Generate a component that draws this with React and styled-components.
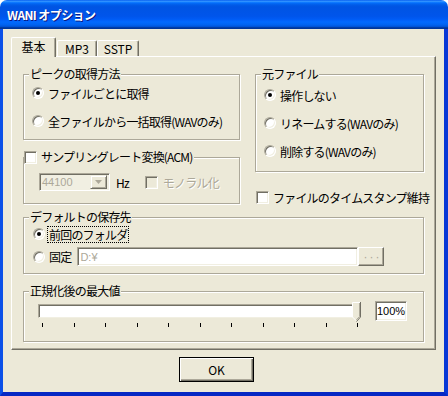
import React from "react"
import styled, { createGlobalStyle } from "styled-components"

// colours
const face = "#ECE9D8"
const shadow = "#ACA899"
const darkShadow = "#716F64"
const light = "#F1EFE2"
const disabledText = "#ACA899"

const GlobalStyle = createGlobalStyle`
  html, body {
    margin: 0;
    padding: 0;
    background: #fff;
  }
  body {
    font-family: "Noto Sans CJK JP", "Noto Sans", sans-serif;
    font-size: 12px;
    line-height: 14px;
    color: #000;
    letter-spacing: -0.8px;
  }
`

// window frame
const Window = styled.div`
  width: 448px;
  height: 396px;
  display: flex;
  flex-direction: column;
  border-radius: 7px 7px 0 0;
  overflow: hidden;
`
const TitleBar = styled.div`
  height: 29px;
  flex: none;
  display: flex;
  align-items: center;
  padding-left: 7px;
  background: linear-gradient(
    to bottom,
    #0058ee 0%,
    #3593ff 4%,
    #288eff 6%,
    #127dff 8%,
    #036ffc 10%,
    #0262ee 14%,
    #0057e5 20%,
    #0054e3 24%,
    #0055eb 56%,
    #005bf5 66%,
    #026afe 76%,
    #0062ef 86%,
    #0052d6 92%,
    #0040ab 94%,
    #003092 100%
  );
  color: #fff;
  font-weight: bold;
  font-size: 12px;
  letter-spacing: -0.6px;
  text-shadow: 1px 1px 0 #0a1883;
`
const Client = styled.div`
  flex: 1;
  display: flex;
  flex-direction: column;
  background: ${face};
  border-left: 3px solid #0b50e8;
  border-right: 4px solid #0737d6;
  border-bottom: 4px solid #0628c4;
  padding: 8px 8px 0;
`

// tabs
const TabRow = styled.div`
  display: flex;
  align-items: flex-end;
  height: 19px;
  position: relative;
  z-index: 1;
`
const Tab = styled.div`
  box-sizing: border-box;
  width: ${p => p.$w}px;
  height: ${p => (p.$active ? 20 : 16)}px;
  margin-bottom: ${p => (p.$active ? -1 : 0)}px;
  margin-left: ${p => p.$ml || 0}px;
  background: ${face};
  border-left: 1px solid #fff;
  border-top: 1px solid #fff;
  border-right: 1px solid ${darkShadow};
  border-radius: 2px 2px 0 0;
  box-shadow: inset -1px 0 0 ${shadow};
  display: flex;
  align-items: center;
  justify-content: center;
  padding-bottom: ${p => (p.$active ? 2 : 0)}px;
  letter-spacing: 0;
`
const Panel = styled.div`
  box-sizing: border-box;
  width: 425px;
  height: 294px;
  border-left: 1px solid #fff;
  border-top: 1px solid #fff;
  border-right: 1px solid ${darkShadow};
  border-bottom: 1px solid ${darkShadow};
  box-shadow: inset -1px -1px 0 ${shadow};
  padding: 17px 11px 0;
  display: flex;
  flex-direction: column;
`
const Columns = styled.div`
  display: grid;
  grid-template-columns: 217px 169px;
  column-gap: 15px;
  align-items: start;
`
const Column = styled.div`
  display: flex;
  flex-direction: column;
`

// group boxes
const Group = styled.div`
  box-sizing: border-box;
  height: ${p => p.$h}px;
  margin-top: ${p => p.$mt || 0}px;
  border: 1px solid ${shadow};
  box-shadow: inset 1px 1px 0 #fff, 1px 1px 0 #fff;
  display: flex;
  flex-direction: column;
`
const Legend = styled.div`
  align-self: flex-start;
  height: 14px;
  margin: -8px 0 0 ${p => (p.$ml === undefined ? 5 : p.$ml)}px;
  padding: 0 1px 0 ${p => (p.$pl === undefined ? 1 : p.$pl)}px;
  background: ${face};
  display: flex;
  align-items: center;
  gap: 4px;
  white-space: nowrap;
`
const Row = styled.div`
  display: flex;
  align-items: center;
  gap: ${p => (p.$gap === undefined ? 4 : p.$gap)}px;
  height: ${p => p.$h || 16}px;
  margin-top: ${p => p.$mt || 0}px;
  padding-left: ${p => p.$pl || 0}px;
  white-space: nowrap;
`
const Label = styled.span`
  color: ${p => (p.$disabled ? disabledText : "#000")};
  text-shadow: ${p => (p.$disabled ? "1px 1px 0 #fff" : "none")};
  outline: ${p => (p.$focus ? "1px dotted #000" : "none")};
  padding: ${p => (p.$focus ? "0 1px" : "0")};
  margin-left: ${p => (p.$focus ? -1 : 0)}px;
  line-height: 15px;
`

// controls
const Radio = styled.span`
  box-sizing: border-box;
  width: 12px;
  height: 12px;
  flex: none;
  border-radius: 50%;
  background: #fff;
  border: 1px solid;
  border-color: ${shadow} #fff #fff ${shadow};
  box-shadow: inset 1px 1px 0 ${darkShadow}, inset -1px -1px 0 ${light};
  display: flex;
  align-items: center;
  justify-content: center;
  &::after {
    content: "";
    display: ${p => (p.$checked ? "block" : "none")};
    width: 4px;
    height: 4px;
    border-radius: 50%;
    background: #000;
  }
`
const Check = styled.span`
  box-sizing: border-box;
  width: 13px;
  height: 13px;
  flex: none;
  margin-left: ${p => p.$ml || 0}px;
  background: ${p => (p.$disabled ? face : "#fff")};
  border: 1px solid;
  border-color: ${shadow} #fff #fff ${shadow};
  box-shadow: inset 1px 1px 0 ${darkShadow}, inset -1px -1px 0 ${light};
`
const Sunken = styled.div`
  box-sizing: border-box;
  height: ${p => p.$h}px;
  width: ${p => p.$w}px;
  flex: none;
  background: ${p => p.$bg || "#fff"};
  border: 1px solid;
  border-color: ${shadow} #fff #fff ${shadow};
  box-shadow: inset 1px 1px 0 ${darkShadow}, inset -1px -1px 0 ${light};
  display: flex;
  align-items: center;
  padding-left: 2px;
  color: ${p => p.$color || "#000"};
  font-family: "Liberation Sans", "Noto Sans CJK JP", sans-serif;
  font-size: 11px;
  letter-spacing: 0;
`
const Combo = styled(Sunken)`
  justify-content: space-between;
  padding-right: 2px;
`
const DropButton = styled.span`
  box-sizing: border-box;
  width: 17px;
  height: 14px;
  background: ${face};
  border: 1px solid;
  border-color: ${light} ${darkShadow} ${darkShadow} ${light};
  box-shadow: inset 1px 1px 0 #fff, inset -1px -1px 0 ${shadow};
  display: flex;
  align-items: center;
  justify-content: center;
`
const Raised = styled.div`
  box-sizing: border-box;
  width: ${p => p.$w}px;
  height: ${p => p.$h}px;
  flex: none;
  background: ${face};
  border: 1px solid;
  border-color: #fff ${darkShadow} ${darkShadow} #fff;
  box-shadow: inset -1px -1px 0 ${shadow};
  display: flex;
  align-items: center;
  justify-content: center;
  color: ${disabledText};
  font-family: "Liberation Sans", sans-serif;
  letter-spacing: 2px;
  padding-left: 2px;
`

// trackbar
const SliderBox = styled.div`
  width: 324px;
  margin-left: 14px;
  padding-top: 3px;
  flex: none;
`
const Track = styled.div`
  box-sizing: border-box;
  position: relative;
  width: 323px;
  height: 14px;
  background: #fff;
  border: 1px solid;
  border-color: ${shadow} ${light} ${light} ${shadow};
  box-shadow: inset 1px 1px 0 ${darkShadow};
`
const Thumb = styled.svg`
  position: absolute;
  right: -1px;
  top: -3px;
`
const Ticks = styled.div`
  display: flex;
  justify-content: space-between;
  width: 316px;
  margin: 5px 0 0 4px;
`
const Tick = styled.span`
  width: 1px;
  height: 4px;
  background: #000;
`
const ValueBox = styled(Sunken)`
  margin-left: 13px;
  font-size: 11px;
  padding-left: 1px;
`

// footer
const Footer = styled.div`
  display: flex;
  margin-top: 7px;
  padding-left: 168px;
`
const OkButton = styled.div`
  box-sizing: border-box;
  width: 75px;
  height: 25px;
  border: 1px solid #000;
  background: ${face};
  box-shadow: inset 1px 1px 0 #fff, inset -1px -1px 0 ${darkShadow},
    inset -2px -2px 0 ${shadow};
  display: flex;
  align-items: center;
  justify-content: center;
  font-size: 12px;
  letter-spacing: 0;
`

const ticks = Array.from({ length: 11 })

export default function App() {
  return (
    <>
      <GlobalStyle />
      <Window>
        <TitleBar>WANI オプション</TitleBar>
        <Client>
          <TabRow>
            <Tab $w={45} $active>
              基本
            </Tab>
            <Tab $w={40} $ml={1}>
              MP3
            </Tab>
            <Tab $w={42}>SSTP</Tab>
          </TabRow>
          <Panel>
            <Columns>
              <Column>
                <Group $h={66}>
                  <Legend>ピークの取得方法</Legend>
                  <Row $mt={4} $pl={8}>
                    <Radio $checked />
                    <Label>ファイルごとに取得</Label>
                  </Row>
                  <Row $mt={12} $pl={8}>
                    <Radio />
                    <Label>全ファイルから一括取得(WAVのみ)</Label>
                  </Row>
                </Group>
                <Group $h={47} $mt={17}>
                  <Legend $ml={0} $pl={0}>
                    <Check />
                    サンプリングレート変換(ACM)
                  </Legend>
                  <Row $h={18} $mt={9} $pl={15} $gap={0}>
                    <Combo $w={71} $h={18} $bg={light} $color={disabledText}>
                      44100
                      <DropButton>
                        <svg width="7" height="4" viewBox="0 0 7 4">
                          <path d="M0 0h7L3.5 4z" fill={disabledText} />
                        </svg>
                      </DropButton>
                    </Combo>
                    <Label style={{ marginLeft: 6 }}>Hz</Label>
                    <Check $disabled $ml={16} />
                    <Label $disabled style={{ marginLeft: 5 }}>
                      モノラル化
                    </Label>
                  </Row>
                </Group>
              </Column>
              <Column>
                <Group $h={98}>
                  <Legend>元ファイル</Legend>
                  <Row $mt={6} $pl={8}>
                    <Radio $checked />
                    <Label>操作しない</Label>
                  </Row>
                  <Row $mt={12} $pl={8}>
                    <Radio />
                    <Label>リネームする(WAVのみ)</Label>
                  </Row>
                  <Row $mt={12} $pl={8}>
                    <Radio />
                    <Label>削除する(WAVのみ)</Label>
                  </Row>
                </Group>
                <Row $mt={17}>
                  <Check $ml={1} />
                  <Label>ファイルのタイムスタンプ維持</Label>
                </Row>
              </Column>
            </Columns>

            <Group $h={57} $mt={12}>
              <Legend>デフォルトの保存先</Legend>
              <Row $mt={2} $pl={9}>
                <Radio $checked />
                <Label $focus>前回のフォルダ</Label>
              </Row>
              <Row $h={19} $mt={5} $pl={9} $gap={0}>
                <Radio />
                <Label style={{ marginLeft: 4 }}>固定</Label>
                <Sunken $w={281} $h={19} $color={disabledText} style={{ marginLeft: 6 }}>
                  D:¥
                </Sunken>
                <Raised $w={26} $h={19}>
                  ···
                </Raised>
              </Row>
            </Group>

            <Group $h={51} $mt={17}>
              <Legend>正規化後の最大値</Legend>
              <Row $h={27} $mt={3} $gap={0} style={{ alignItems: "flex-start" }}>
                <SliderBox>
                  <Track>
                    <Thumb width="9" height="20" viewBox="0 0 9 20">
                      <path d="M0.5 0.5h8v14.5l-4 4-4-4z" fill={face} />
                      <path d="M0.5 15V0.5h7.5" stroke="#fff" fill="none" />
                      <path d="M8.5 0v15l-4 4.5" stroke={darkShadow} fill="none" />
                      <path d="M7.5 1v13.6l-3.2 3.2" stroke={shadow} fill="none" />
                      <path d="M0.5 15l3.6 3.6" stroke="#fff" fill="none" />
                    </Thumb>
                  </Track>
                  <Ticks>
                    {ticks.map((_, i) => (
                      <Tick key={i} />
                    ))}
                  </Ticks>
                </SliderBox>
                <ValueBox $w={32} $h={20}>
                  100%
                </ValueBox>
              </Row>
            </Group>
          </Panel>
          <Footer>
            <OkButton>OK</OkButton>
          </Footer>
        </Client>
      </Window>
    </>
  )
}
